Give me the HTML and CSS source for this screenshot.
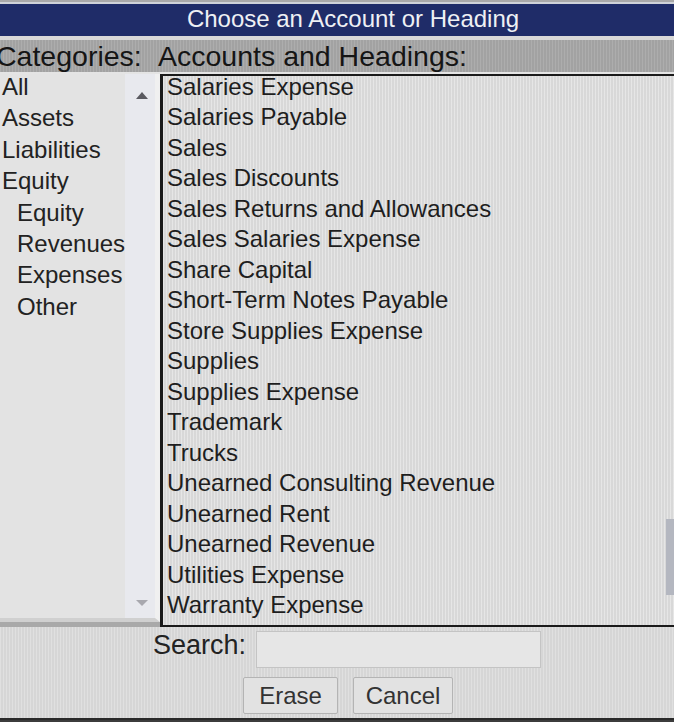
FILE: index.html
```html
<!DOCTYPE html>
<html lang="en">
  <head>
    <meta charset="UTF-8" />
    <meta name="viewport" content="width=device-width,initial-scale=1.0" />
    <title>Choose an Account or Heading</title>
    <link rel="stylesheet" href="styles.css">
  </head>
  <body>
    <div class="dialog">
      <div class="title">Choose an Account or Heading</div>
      <div class="head">
        <span class="head-cat">Categories:</span>
        <span class="head-acc">Accounts and Headings:</span>
      </div>
      <div class="lists">
        <div class="cat-box">
          <ul class="cat-list">
            <li>All</li>
            <li>Assets</li>
            <li>Liabilities</li>
            <li>Equity</li>
            <li class="sub">Equity</li>
            <li class="sub">Revenues</li>
            <li class="sub">Expenses</li>
            <li class="sub">Other</li>
          </ul>
          <div class="cat-scroll">
            <span class="arrow up"></span>
            <span class="arrow down"></span>
          </div>
        </div>
        <div class="acc-box">
          <ul class="acc-list">
            <li>Salaries Expense</li>
            <li>Salaries Payable</li>
            <li>Sales</li>
            <li>Sales Discounts</li>
            <li>Sales Returns and Allowances</li>
            <li>Sales Salaries Expense</li>
            <li>Share Capital</li>
            <li>Short-Term Notes Payable</li>
            <li>Store Supplies Expense</li>
            <li>Supplies</li>
            <li>Supplies Expense</li>
            <li>Trademark</li>
            <li>Trucks</li>
            <li>Unearned Consulting Revenue</li>
            <li>Unearned Rent</li>
            <li>Unearned Revenue</li>
            <li>Utilities Expense</li>
            <li>Warranty Expense</li>
          </ul>
          <div class="acc-scroll"><span class="thumb"></span></div>
        </div>
      </div>
      <div class="footer">
        <div class="search-row">
          <label for="search">Search:</label>
          <input type="text" id="search" name="search" />
        </div>
        <div class="btn-row">
          <button type="button" class="btn erase">Erase</button>
          <button type="button" class="btn cancel">Cancel</button>
        </div>
      </div>
    </div>
  </body>
</html>
```

FILE: styles.css
```css
* {
  margin: 0;
  padding: 0;
  box-sizing: border-box;
}
html, body {
  font-family: "Liberation Sans", Arial, sans-serif;
  background: #3c3c3c;
  color: #1c1c1c;
  height: 100%;
  overflow: hidden;
}
.dialog {
  display: flex;
  flex-direction: column;
  height: 720px;
  padding-top: 2px;
  background: #a9a9a9;
}
.title {
  border-top: 2px solid #cfd2d8;
  height: 38px;
  background: #1f2c68;
  color: #eef0f4;
  font-size: 24px;
  line-height: 30px;
  text-align: center;
  padding-left: 32px;
  border-bottom: 4px solid #d8d8d8;
}
.head {
  height: 34px;
  display: flex;
  align-items: center;
  font-size: 28.5px;
  background: #a2a2a2 repeating-linear-gradient(90deg, rgba(255,255,255,0.12) 0 1px, transparent 1px 3px);
  color: #151515;
  border-bottom: 2px solid #e4e4e4;
}
.head-cat {
  margin-left: -4px;
  width: 162px;
}
.lists {
  display: flex;
  height: 553px;
}
.cat-box {
  width: 160px;
  display: flex;
  background: #e3e3e3;
  border-right: 5px solid #f0f0f0;
  border-bottom: 4px solid #d0d0d0;
  height: 548px;
  overflow: hidden;
}
.cat-list {
  list-style: none;
  width: 125px;
  margin-top: -3px;
  font-size: 24px;
  line-height: 31.4px;
  color: #222;
}
.cat-list li {
  padding-left: 2px;
  white-space: nowrap;
}
.cat-list li.sub {
  padding-left: 17px;
}
.cat-scroll {
  flex: 1;
  display: flex;
  flex-direction: column;
  justify-content: space-between;
  align-items: center;
  background: #e8e9ee;
  padding: 18px 0 12px 4px;
}
.arrow {
  width: 0;
  height: 0;
  border-left: 6px solid transparent;
  border-right: 6px solid transparent;
}
.arrow.up {
  border-bottom: 7px solid #5a5a60;
}
.arrow.down {
  border-top: 6px solid #a8a8ae;
}
.acc-box {
  flex: 1;
  display: flex;
  background: #d8d8d8 repeating-linear-gradient(90deg, rgba(255,255,255,0.35) 0 1px, transparent 1px 3px);
  border-left: 3px solid #1a1a1a;
  border-top: 2px solid #1a1a1a;
  border-bottom: 2px solid #1a1a1a;
  overflow: hidden;
}
.acc-list {
  list-style: none;
  flex: 1;
  margin-top: -4px;
  padding-left: 4px;
  font-size: 24px;
  line-height: 30.47px;
  color: #1e1e1e;
}
.acc-list li {
  white-space: nowrap;
}
.acc-scroll {
  width: 8px;
  display: flex;
  flex-direction: column;
  justify-content: flex-end;
  padding-bottom: 30px;
}
.thumb {
  display: block;
  height: 76px;
  background: #b4b7c0;
}
.footer {
  flex: 1;
  background: #d6d6d6 repeating-linear-gradient(90deg, rgba(255,255,255,0.25) 0 1px, transparent 1px 3px);
  display: flex;
  flex-direction: column;
  border-bottom: 2px solid #2a2a2a;
}
.search-row {
  display: flex;
  align-items: center;
  gap: 10px;
  padding-left: 153px;
  height: 44px;
}
.search-row label {
  font-size: 27px;
  color: #222;
  margin-bottom: 8px;
}
.search-row input {
  width: 285px;
  height: 37px;
  border: 1px solid #c4c4c4;
  background: #e6e6e6;
}
.btn-row {
  display: flex;
  gap: 15px;
  padding-left: 243px;
  padding-top: 6px;
}
.btn {
  font-family: "Liberation Sans", Arial, sans-serif;
  font-size: 24px;
  color: #333;
  height: 37px;
  background: #e2e2e2;
  border: 1px solid #b4b4b4;
  border-radius: 2px;
}
.erase {
  width: 95px;
}
.cancel {
  width: 100px;
}
```
